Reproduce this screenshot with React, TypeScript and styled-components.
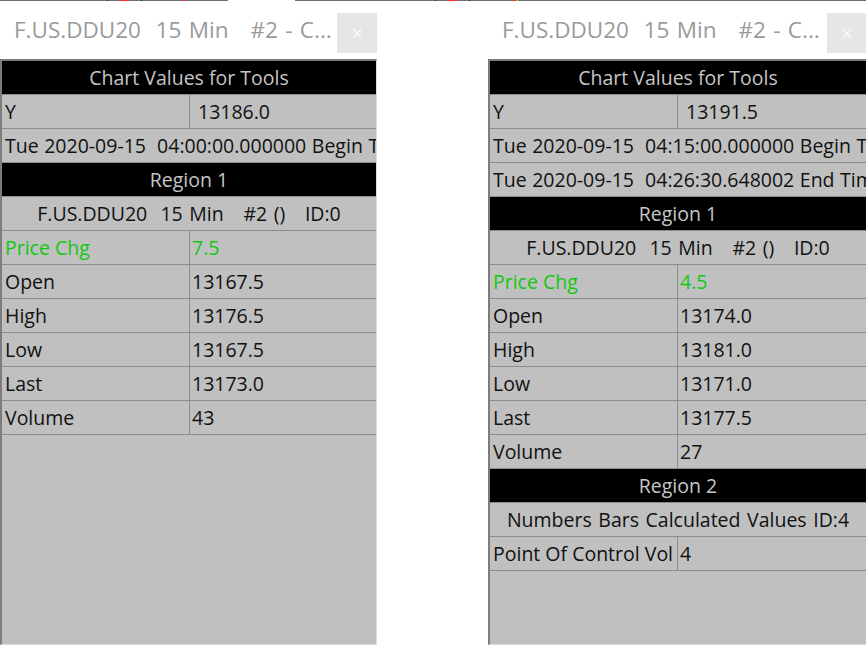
import React from "react";
import styled, { createGlobalStyle } from "styled-components";

type Row =
  | { kind: "header"; text: string }
  | { kind: "center"; text: string }
  | { kind: "line"; text: string }
  | { kind: "pair"; label: string; value: string; green?: boolean; indent?: boolean };

interface WindowData {
  title: string;
  width: number;
  rows: Row[];
}

const ohlc = (o: string, h: string, l: string, c: string, v: string): Row[] => [
  { kind: "pair", label: "Open", value: o },
  { kind: "pair", label: "High", value: h },
  { kind: "pair", label: "Low", value: l },
  { kind: "pair", label: "Last", value: c },
  { kind: "pair", label: "Volume", value: v },
];

const windows: WindowData[] = [
  {
    title: "F.US.DDU20  15 Min   #2 - C...",
    width: 377,
    rows: [
      { kind: "header", text: "Chart Values for Tools" },
      { kind: "pair", label: "Y", value: "13186.0", indent: true },
      { kind: "line", text: "Tue 2020-09-15  04:00:00.000000 Begin Time" },
      { kind: "header", text: "Region 1" },
      { kind: "center", text: "F.US.DDU20  15 Min   #2 ()   ID:0" },
      { kind: "pair", label: "Price Chg", value: "7.5", green: true },
      ...ohlc("13167.5", "13176.5", "13167.5", "13173.0", "43"),
    ],
  },
  {
    title: "F.US.DDU20  15 Min   #2 - C...",
    width: 379,
    rows: [
      { kind: "header", text: "Chart Values for Tools" },
      { kind: "pair", label: "Y", value: "13191.5", indent: true },
      { kind: "line", text: "Tue 2020-09-15  04:15:00.000000 Begin Time" },
      { kind: "line", text: "Tue 2020-09-15  04:26:30.648002 End Time" },
      { kind: "header", text: "Region 1" },
      { kind: "center", text: "F.US.DDU20  15 Min   #2 ()   ID:0" },
      { kind: "pair", label: "Price Chg", value: "4.5", green: true },
      ...ohlc("13174.0", "13181.0", "13171.0", "13177.5", "27"),
      { kind: "header", text: "Region 2" },
      { kind: "center", text: "Numbers Bars Calculated Values ID:4" },
      { kind: "pair", label: "Point Of Control Vol", value: "4" },
    ],
  },
];

// leftover of the chart above the tool windows: a 1px line with a few marks
const TopMarks = () => (
  <TopStrip width="866" height="1" viewBox="0 0 866 1">
    <rect x="0" y="0" width="228" height="1" fill="#6e6e6e" />
    <rect x="295" y="0" width="571" height="1" fill="#6e6e6e" />
    <rect x="107" y="0" width="1" height="1" fill="#1a1a1a" />
    <rect x="141" y="0" width="1" height="1" fill="#1a1a1a" />
    <rect x="120" y="0" width="9" height="1" fill="#ff2a2a" />
    <rect x="183" y="0" width="3" height="1" fill="#ff2a2a" />
    <rect x="435" y="0" width="1" height="1" fill="#1a1a1a" />
    <rect x="469" y="0" width="1" height="1" fill="#1a1a1a" />
    <rect x="448" y="0" width="9" height="1" fill="#ff2a2a" />
    <rect x="512" y="0" width="3" height="1" fill="#ff2a2a" />
    <rect x="517" y="0" width="1" height="1" fill="#ffe600" />
  </TopStrip>
);

const TableRow = ({ row }: { row: Row }) => {
  switch (row.kind) {
    case "header":
      return <HeaderRow>{row.text}</HeaderRow>;
    case "center":
      return <CenterRow>{row.text}</CenterRow>;
    case "line":
      return <LineRow>{row.text}</LineRow>;
    default:
      return (
        <PairRow $green={row.green}>
          <Label>{row.label}</Label>
          <Value $indent={row.indent}>{row.value}</Value>
        </PairRow>
      );
  }
};

const ToolWindow = ({ data }: { data: WindowData }) => (
  <Window $width={data.width}>
    <TitleBar>
      <Title>{data.title}</Title>
      <CloseButton>×</CloseButton>
    </TitleBar>
    <Panel>
      {data.rows.map((row, i) => (
        <TableRow key={i} row={row} />
      ))}
    </Panel>
  </Window>
);

export default function App() {
  return (
    <Page>
      <GlobalStyle />
      <TopMarks />
      <Windows>
        {windows.map((w, i) => (
          <ToolWindow key={i} data={w} />
        ))}
      </Windows>
    </Page>
  );
}

const GlobalStyle = createGlobalStyle`
  html, body {
    margin: 0;
    padding: 0;
    background: #ffffff;
  }
  body {
    font-family: "Open Sans", "Noto Sans", sans-serif;
    overflow: hidden;
  }
`;

const Page = styled.div`
  width: 866px;
  height: 646px;
  overflow: hidden;
  display: flex;
  flex-direction: column;
  background: #ffffff;
`;

const TopStrip = styled.svg`
  display: block;
  flex-shrink: 0;
`;

const Windows = styled.div`
  display: flex;
  gap: 111px;
  height: 644px;
`;

const Window = styled.div<{ $width: number }>`
  width: ${(p) => p.$width}px;
  flex-shrink: 0;
  display: flex;
  flex-direction: column;
`;

const TitleBar = styled.div`
  height: 58px;
  display: flex;
  justify-content: space-between;
  align-items: flex-start;
  background: #ffffff;
`;

const Title = styled.div`
  padding: 16px 0 0 14px;
  font-size: 22.5px;
  line-height: 26px;
  word-spacing: 1.5px;
  color: #9a9a9a;
  white-space: pre;
`;

const CloseButton = styled.div`
  margin-top: 12px;
  width: 40px;
  height: 40px;
  display: flex;
  align-items: center;
  justify-content: center;
  background: #e6e6e6;
  color: #f7f7f7;
  font-size: 17px;
  font-family: "DejaVu Sans", sans-serif;
`;

const Panel = styled.div`
  flex: 1;
  display: flex;
  flex-direction: column;
  background: #c0c0c0;
  border-top: 2px solid #7c7c7c;
  border-left: 2px solid #7c7c7c;
  border-right: 1px solid #dcdcdc;
  border-bottom: 1px solid #dcdcdc;
  overflow: hidden;
`;

const BaseRow = styled.div`
  height: 34px;
  box-sizing: border-box;
  flex-shrink: 0;
  padding-top: 1px;
  border-bottom: 1px solid #8c8c8c;
  font-size: 19.5px;
  line-height: 32px;
  color: #111111;
  white-space: pre;
  overflow: hidden;
`;

const HeaderRow = styled(BaseRow)`
  background: #000000;
  color: #c6c6c6;
  text-align: center;
`;

const CenterRow = styled(BaseRow)`
  text-align: center;
  word-spacing: 1.5px;
`;

const LineRow = styled(BaseRow)`
  padding-left: 3px;
  word-spacing: 0.5px;
`;

const PairRow = styled(BaseRow)<{ $green?: boolean }>`
  display: grid;
  grid-template-columns: 188px 1fr;
  padding-top: 0;
  line-height: 33px;
  color: ${(p) => (p.$green ? "#10c810" : "#111111")};
`;

const Label = styled.div`
  box-sizing: border-box;
  padding: 1px 0 0 3px;
  line-height: 32px;
  border-right: 1px solid #8c8c8c;
  overflow: hidden;
`;

const Value = styled.div<{ $indent?: boolean }>`
  padding: 1px 0 0 ${(p) => (p.$indent ? 8 : 2)}px;
  line-height: 32px;
  overflow: hidden;
`;
